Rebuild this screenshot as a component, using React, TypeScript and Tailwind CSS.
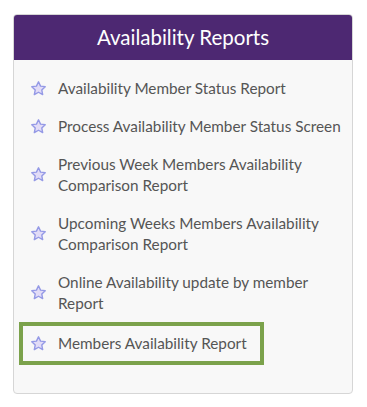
import React from "react";

const Star = () => (
  <svg width="17" height="17" viewBox="0 0 24 24" className="shrink-0">
    <path
      d="M12 2.5l2.9 6.1 6.6.8-4.9 4.6 1.3 6.6L12 17.3l-5.9 3.3 1.3-6.6-4.9-4.6 6.6-.8z"
      fill="#e2dcf7"
      stroke="#959ae6"
      strokeWidth="2"
      strokeLinejoin="round"
    />
  </svg>
);

const items: { lines: string[]; hl?: boolean }[] = [
  { lines: ["Availability Member Status Report"] },
  { lines: ["Process Availability Member Status Screen"] },
  { lines: ["Previous Week Members Availability", "Comparison Report"] },
  { lines: ["Upcoming Weeks Members Availability", "Comparison Report"] },
  { lines: ["Online Availability update by member", "Report"] },
  { lines: ["Members Availability Report"], hl: true },
];

export default function App() {
  return (
    <div className="w-[367px] h-[407px] bg-white pt-[14px] pl-[13px]" style={{ fontFamily: "Lato, 'Open Sans', sans-serif" }}>
      <div className="w-[340px] h-[380px] rounded-[4px] border border-[#d6d6d6] bg-[#f8f8f8] overflow-hidden">
        <div className="h-[45px] bg-[#4d2872] flex items-center justify-center text-white text-[20.5px] pb-[1px]">
          Availability Reports
        </div>
        <div className="pt-[9px]">
          {items.map((it, i) => (
            <div
              key={i}
              className={
                it.hl
                  ? "ml-[5px] w-[245px] border-[4px] border-[#7ba24b] flex items-center pl-[7px] py-[7px] text-[15.3px] leading-[21px] text-[#555]"
                  : "ml-[9px] flex items-center pl-[7px] py-[8.5px] text-[15.3px] leading-[21px] text-[#555]"
              }
            >
              <Star />
              <div className="ml-[11px]">
                {it.lines.map((l, j) => (
                  <div key={j}>{l}</div>
                ))}
              </div>
            </div>
          ))}
        </div>
      </div>
    </div>
  );
}
